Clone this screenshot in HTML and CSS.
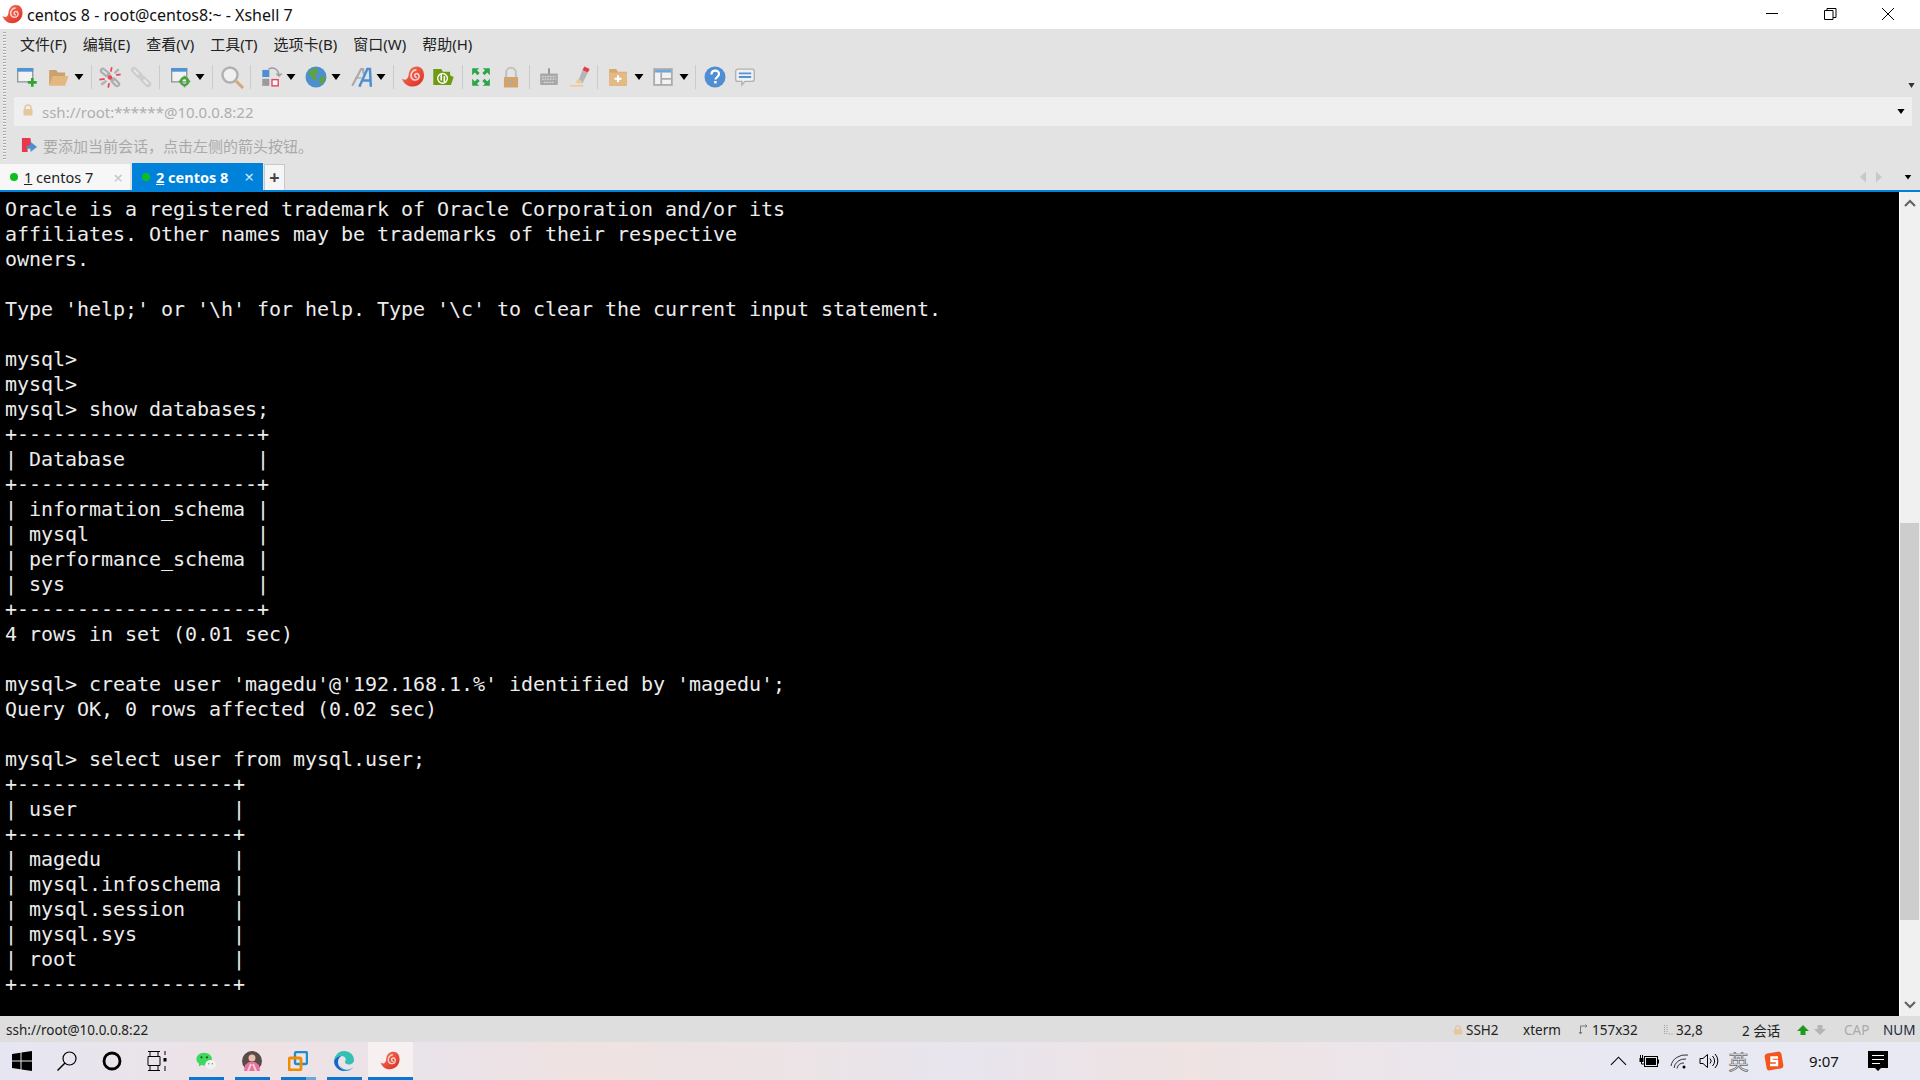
FILE: index.html
```html
<!DOCTYPE html>
<html lang="zh-CN">
<head>
<meta charset="utf-8">
<title>centos 8 - root@centos8:~ - Xshell 7</title>
<link rel="stylesheet" href="styles.css">
</head>
<body>
<svg class="defs" width="0" height="0" aria-hidden="true">
  <defs>
    <linearGradient id="snailGrad" x1="0" y1="0" x2="1" y2="1"><stop offset="0" stop-color="#f47a5c"/><stop offset="1" stop-color="#dd2a22"/></linearGradient>
    <symbol id="snail" viewBox="0 0 24 24">
      <path d="M0.500 13.500C4 16.500 7 14.500 7.500 9.500 8 4 11.500 1 16 1c4.800 0 7.500 4 7.500 9 0 7-5.500 12-12 12C6 22 2 18.500 0.500 13.500Z" fill="url(#snailGrad)"/>
      <path d="M16 12.500c-2.500 0-3-3-1-3.800 2.500-.9 4.300 1.800 3 4.300-1.600 3.200-7 3-8-1.500-.7-3.500 2-7 5.500-7" fill="none" stroke="#fff" stroke-opacity=".75" stroke-width="1.700"/>
    </symbol>
    <symbol id="win-sm" viewBox="0 0 26 26">
      <rect x="2.500" y="3.500" width="17" height="15" fill="#f2f2f2" stroke="#8a8f94" stroke-width="1.400"/>
      <rect x="2" y="3" width="18" height="4" fill="#4d95d8"/>
    </symbol>
  </defs>
</svg>
<div class="window">
  <header class="titlebar">
    <svg class="title-logo"><use href="#snail"/></svg>
    <span class="title-text">centos 8 - root@centos8:~ - Xshell 7</span>
    <div class="win-controls">
      <svg class="wc" viewBox="0 0 58 29"><path d="M23 13.500h12" stroke="#000" fill="none"/></svg>
      <svg class="wc" viewBox="0 0 58 29"><path d="M23.500 10.500h8.500v9h-8.500zM26 10V8.500h9v9h-3" stroke="#000" fill="none"/></svg>
      <svg class="wc" viewBox="0 0 58 29"><path d="M23 8l12 12M35 8L23 20" stroke="#000" fill="none"/></svg>
    </div>
  </header>

  <div class="chrome">
    <nav class="menubar">
      <span>文件(F)</span><span>编辑(E)</span><span>查看(V)</span><span>工具(T)</span><span>选项卡(B)</span><span>窗口(W)</span><span>帮助(H)</span>
    </nav>

    <div class="toolbar">
      <svg class="ic" viewBox="0 0 26 26"><use href="#win-sm" width="26" height="26"/><path d="M14 19h10M19 14v10" stroke="#2fa52f" stroke-width="3"/></svg>
      <svg class="ic ml5" viewBox="0 0 26 26"><path d="M3 5h8l2 3h8v5H8l-5 10z" fill="#c9a26e"/><path d="M3 23l4-11h18l-4 11z" fill="#e3b87e"/></svg>
      <i class="caret ml3"></i><i class="sep ml7"></i>
      <svg class="ic ml5" viewBox="0 0 26 26"><path d="M5 6l5 4M17 17l4 4" stroke="#aeaeae" stroke-width="7" stroke-linecap="round"/><path d="M5 6l4 3M18 18l3 3" stroke="#e3e3e3" stroke-width="2" stroke-linecap="round"/><path d="M4 21l4-3M22 5l-3 3" stroke="#b5b5b5" stroke-width="3" stroke-linecap="round"/><path d="M15 2l-1 5M25 10l-5 1M1 16l6-1M11 25l1-5" stroke="#e8465a" stroke-width="2"/><circle cx="13" cy="13.500" r="2.500" fill="#e8465a"/></svg>
      <svg class="ic ml5" viewBox="0 0 26 26"><path d="M5 5l6 6M15 15l6 6" stroke="#cdcdcd" stroke-width="7" stroke-linecap="round"/><path d="M5.500 5.500l5 5M15.500 15.500l5 5" stroke="#ececec" stroke-width="2" stroke-linecap="round"/><path d="M10 10l6 6" stroke="#cdcdcd" stroke-width="3"/></svg>
      <i class="sep ml5"></i>
      <svg class="ic ml8" viewBox="0 0 26 26"><use href="#win-sm" width="26" height="26"/><circle cx="17" cy="18" r="4" fill="none" stroke="#4aa53a" stroke-width="3"/><path d="M17 11.500v3M17 21.500v3M10.500 18h3M20.500 18h3" stroke="#4aa53a" stroke-width="2"/></svg>
      <i class="caret ml1"></i><i class="sep ml7"></i>
      <svg class="ic big ml6" viewBox="0 0 26 26"><circle cx="11" cy="11" r="7.500" fill="#f0f0f0" stroke="#b0b0b0" stroke-width="2.400"/><path d="M17 17l7 7" stroke="#d3a878" stroke-width="3"/></svg>
      <i class="sep ml5"></i>
      <svg class="ic ml8" viewBox="0 0 26 26"><rect x="2" y="5" width="8" height="8" fill="#4d8fd0"/><rect x="2" y="15" width="8" height="8" fill="#9a9a9a"/><rect x="13" y="16" width="7" height="7" fill="#fff" stroke="#e8465a" stroke-width="1.600"/><path d="M9 4c6-3 11 0 12 7M18 9l3 3 3-3" fill="none" stroke="#9a9a9a" stroke-width="1.500"/></svg>
      <i class="caret ml1"></i>
      <svg class="ic big ml7" viewBox="0 0 26 26"><circle cx="13" cy="13" r="10.500" fill="#4d8fd0"/><path d="M8 5l6-1 1 4-3 3 2 4-3 2-3-5-3-2zM17 13l5-1 0 4-4 5-2-3z" fill="#5fa23f"/></svg>
      <i class="caret ml2"></i>
      <svg class="ic ml8" viewBox="0 0 26 26"><path d="M2 23L12 4h2l1 6" fill="none" stroke="#a9a9a9" stroke-width="2.400"/><path d="M5 14h7" stroke="#a9a9a9" stroke-width="1.500"/><path d="M10 24L19 4h3l1 20M13 17h10" fill="none" stroke="#4d8fd0" stroke-width="2.800"/></svg>
      <i class="caret ml1"></i><i class="sep ml7"></i>
      <svg class="ic ml6" viewBox="0 0 24 24"><use href="#snail" width="24" height="24"/></svg>
      <svg class="ic ml4" viewBox="0 0 26 26"><path d="M2 4h9l2 3h8v4l4 2-3 9H2z" fill="#6f9b12"/><circle cx="12.500" cy="14.500" r="5.500" fill="none" stroke="#fff" stroke-width="1.600"/><path d="M11 10v7M14.500 12v7" stroke="#fff" stroke-width="1.800"/></svg>
      <i class="sep ml6"></i>
      <svg class="ic ml5" viewBox="0 0 26 26"><path d="M3 3h8l-2.500 2.500 3 3-2.500 2.500-3-3L3 11zM23 3h-8l2.500 2.500-3 3 2.500 2.500 3-3L23 11zM3 23h8l-2.500-2.500 3-3-2.500-2.500-3 3L3 15zM23 23h-8l2.500-2.500-3-3 2.500-2.500 3 3L23 15z" fill="#2fa54a"/></svg>
      <svg class="ic ml4" viewBox="0 0 26 26"><path d="M7.500 13V8a5.500 5.500 0 0 1 11 0v5" fill="none" stroke="#c2c2c2" stroke-width="2.400"/><rect x="5" y="13" width="16" height="12" rx="1" fill="#d3a36a"/><rect x="12" y="16" width="2.500" height="6" fill="#aaa"/></svg>
      <i class="sep ml5"></i>
      <svg class="ic ml6" viewBox="0 0 26 26"><path d="M13 3v7" stroke="#8f8f8f" stroke-width="2"/><rect x="3" y="9" width="20" height="13" rx="1" fill="#a8a8a8"/><path d="M5 12.500h16M5 15.500h16M7 19h12" stroke="#d8d8d8" stroke-width="1.400" stroke-dasharray="2 1"/></svg>
      <svg class="ic ml4" viewBox="0 0 26 26"><path d="M12 18l5-13 6 3-6 12z" fill="#b5b5b5"/><path d="M19 1l6 3-2 4-6-3z" fill="#e8384a"/><path d="M9 19l3-4 5 3-4 3z" fill="#eecb9d"/><rect x="3" y="22" width="15" height="2" fill="#eecb9d"/></svg>
      <i class="sep ml5"></i>
      <svg class="ic ml7" viewBox="0 0 26 26"><path d="M3 4h8l2 3h10v16H3z" fill="#d9a871"/><path d="M3 8h20v15H3z" fill="#e3b986"/><path d="M13 11v8M9 15h8" stroke="#fff" stroke-width="2.400"/></svg>
      <i class="caret ml3"></i>
      <svg class="ic ml6" viewBox="0 0 26 26"><rect x="3" y="4" width="20" height="18" fill="#f2f2f2" stroke="#aaa" stroke-width="2"/><rect x="4" y="5" width="18" height="3" fill="#6aa7de"/><path d="M11 8v14M11 15h12" stroke="#aaa" stroke-width="2"/></svg>
      <i class="caret ml3"></i><i class="sep ml6"></i>
      <svg class="ic big ml6" viewBox="0 0 26 26"><circle cx="13" cy="13" r="10.500" fill="#4f8ed4"/><path d="M9.500 10.500c0-5 7.500-5 7.500-.5 0 3-3.500 3-3.500 5.500" fill="none" stroke="#fff" stroke-width="2.200"/><rect x="12.200" y="17" width="2.400" height="2.400" fill="#fff"/></svg>
      <svg class="ic ml4" viewBox="0 0 26 26"><path d="M5 4h16a2.500 2.500 0 0 1 2.500 2.500v9A2.500 2.500 0 0 1 21 18h-8l-3.500 4v-4H5a2.500 2.500 0 0 1-2.500-2.500v-9A2.500 2.500 0 0 1 5 4z" fill="#f0f0f0" stroke="#b0b0b0" stroke-width="1.500"/><path d="M6 9h14M6 13h14" stroke="#4d95d8" stroke-width="2"/></svg>
      <i class="caret caret-end"></i>
    </div>

    <div class="addressbar">
      <svg class="addr-lock" viewBox="0 0 12 12"><path d="M3 6V4a3 3 0 0 1 6 0v2" fill="none" stroke="#e5c79d" stroke-width="1.500"/><rect x="1.500" y="5" width="9" height="6.500" rx="1" fill="#e5c79d"/></svg>
      <span class="addr-text">ssh://root:******@10.0.0.8:22</span>
      <i class="caret caret-addr"></i>
    </div>

    <div class="linkbar">
      <svg class="link-ic" viewBox="0 0 18 18"><path d="M1 1h9l1 8-4 1v6l-6 0z" fill="#e8384a"/><path d="M6 9h4V5l7 5.500-7 5.500v-3.500H6z" fill="#4d8fd0"/></svg>
      <span class="link-text">要添加当前会话，点击左侧的箭头按钮。</span>
    </div>

    <div class="tabbar">
      <div class="tab">
        <i class="dot"></i><span class="tab-name"><u>1</u> centos 7</span><span class="tab-x">×</span>
      </div>
      <div class="tab tab-active">
        <i class="dot"></i><span class="tab-name"><u>2</u> centos 8</span><span class="tab-x">×</span>
      </div>
      <div class="tab-add">+</div>
      <div class="tab-nav">
        <i class="arrow-l"></i><i class="arrow-r"></i><i class="caret"></i>
      </div>
    </div>
  </div>

  <main class="session">
<pre class="terminal">Oracle is a registered trademark of Oracle Corporation and/or its
affiliates. Other names may be trademarks of their respective
owners.

Type 'help;' or '\h' for help. Type '\c' to clear the current input statement.

mysql> 
mysql> 
mysql> show databases;
+--------------------+
| Database           |
+--------------------+
| information_schema |
| mysql              |
| performance_schema |
| sys                |
+--------------------+
4 rows in set (0.01 sec)

mysql> create user 'magedu'@'192.168.1.%' identified by 'magedu';
Query OK, 0 rows affected (0.02 sec)

mysql> select user from mysql.user;
+------------------+
| user             |
+------------------+
| magedu           |
| mysql.infoschema |
| mysql.session    |
| mysql.sys        |
| root             |
+------------------+</pre>
    <div class="scrollbar">
      <svg class="sb-arrow" viewBox="0 0 20 24"><path d="M5 14l5-5 5 5" fill="none" stroke="#606060" stroke-width="2"/></svg>
      <div class="sb-track"><div class="sb-thumb"></div></div>
      <svg class="sb-arrow" viewBox="0 0 20 24"><path d="M5 10l5 5 5-5" fill="none" stroke="#606060" stroke-width="2"/></svg>
    </div>
  </main>

  <footer class="statusbar">
    <span class="st-left">ssh://root@10.0.0.8:22</span>
    <div class="st-right">
      <span class="st st-ssh"><svg class="st-ic" viewBox="0 0 12 12"><path d="M3 6V4a3 3 0 0 1 6 0v2" fill="none" stroke="#e5c79d" stroke-width="1.500"/><rect x="1" y="5" width="10" height="6.500" rx="1" fill="#e5c79d"/></svg>SSH2</span>
      <span class="st st-term">xterm</span>
      <span class="st st-size"><svg class="st-ic" viewBox="0 0 10 12"><path d="M1.500 10V2H8M0 8l1.500 2L3 8M6.500 .5L8 2 6.500 3.500" fill="none" stroke="#777"/></svg>157x32</span>
      <span class="st st-pos"><svg class="st-ic" viewBox="0 0 10 12"><path d="M1.500 1v9M4 1v9M6 10h1M8.500 10h1" fill="none" stroke="#999" stroke-dasharray="1 1"/></svg>32,8</span>
      <span class="st st-sess">2 会话</span>
      <span class="st st-arrows">
        <svg viewBox="0 0 12 10" class="st-arr"><path d="M6 0l6 6H8.500v4h-5V6H0z" fill="#1f9a1f"/></svg>
        <svg viewBox="0 0 12 10" class="st-arr"><path d="M6 10L0 4h3.500V0h5v4H12z" fill="#b5b5b5"/></svg>
      </span>
      <span class="st st-cap">CAP</span>
      <span class="st st-num">NUM</span>
    </div>
  </footer>

  <div class="taskbar">
    <div class="tk-sys">
      <div class="tk-cell"><svg class="tk-ic" viewBox="0 0 20 20"><path d="M0 3l8.500-1.200V9.500H0zM9.500 1.600L20 0v9.500H9.500zM0 10.500h8.500v7.700L0 17zM9.500 10.500H20V20L9.500 18.400z" fill="#000"/></svg></div>
      <div class="tk-cell"><svg class="tk-ic" viewBox="0 0 20 20"><circle cx="12.500" cy="7.500" r="6.500" fill="none" stroke="#000" stroke-width="1.200"/><path d="M8 12l-7.500 7.500" stroke="#000" stroke-width="1.400"/></svg></div>
      <div class="tk-cell"><svg class="tk-ic" viewBox="0 0 20 20"><circle cx="10" cy="10" r="8" fill="none" stroke="#000" stroke-width="2.800"/></svg></div>
      <div class="tk-cell"><svg class="tk-ic" viewBox="0 0 20 20"><path d="M1 .5h12M1 19.500h12M1 14.500h12V5.500H1zM3 14.500v5M11 14.500v5M3 0v5M11 0v5M18 0v4M18 15v5" fill="none" stroke="#000"/><rect x="16.500" y="7" width="3" height="3.500" fill="#000"/></svg></div>
    </div>
    <div class="tk-apps">
      <div class="tk-app"><svg class="tk-ic" viewBox="0 0 22 20"><path d="M9 1c5 0 8.500 3.200 8.500 7s-3.500 7-8.500 7c-1 0-2-.1-3-.5L3 16l.5-3C1.500 11.800.500 10 .500 8 .500 4.200 4 1 9 1z" fill="#3fd75f"/><circle cx="6" cy="6" r="1.200" fill="#0d5f1f"/><circle cx="12" cy="6" r="1.200" fill="#0d5f1f"/><ellipse cx="16" cy="14" rx="6" ry="5" fill="#f2f2f2"/><circle cx="14" cy="13" r=".8" fill="#888"/><circle cx="18" cy="13" r=".8" fill="#888"/></svg></div>
      <div class="tk-app"><svg class="tk-ic" viewBox="0 0 20 20"><circle cx="10" cy="10" r="10" fill="#5a4a48"/><path d="M2 20l1-6 4-3h6l4 3 1 6z" fill="#e870a8"/><circle cx="10" cy="7" r="3.500" fill="#e8c0b0"/><path d="M6 20l3-7M14 20l-3-7" stroke="#f5d0c0" stroke-width="2"/></svg></div>
      <div class="tk-app tk-app-vm"><svg class="tk-ic" viewBox="0 0 20 20"><rect x="7" y="1" width="12" height="12" rx="1.500" fill="none" stroke="#1d8fd0" stroke-width="2.400"/><rect x="1" y="7" width="12" height="12" rx="1.500" fill="none" stroke="#f08c00" stroke-width="2.800"/></svg></div>
      <div class="tk-app"><svg class="tk-ic" viewBox="0 0 20 20"><path d="M10 0c5.500 0 10 3.800 10 9 0 2.800-2.300 4.500-5 4.500-2 0-4-.8-4-2.500 0-1 .8-1.300.8-2.500C11.800 6.500 9.800 5 7.500 5 4 5 1 7 0 10 .500 4.500 4.500 0 10 0z" fill="#35c1b1"/><path d="M0 10c1-3 4-5 7.500-5-2 1-3.500 3-3.500 6 0 4.500 4 8 8.500 8 .500 0 1 0 1.500-.2C12.500 19.600 11.300 20 10 20 4.500 20 0 15.500 0 10z" fill="#1668c8"/><path d="M14 19.800c-3 .5-8-1.500-8-7 0 4 4 6 7 6 2.500 0 5-1 6-3-.8 2-2.800 3.500-5 4z" fill="#1b9de2"/></svg></div>
      <div class="tk-app tk-app-active"><svg class="tk-ic" viewBox="0 0 24 24"><use href="#snail" width="24" height="24"/></svg></div>
    </div>
    <div class="tray">
      <div class="tr-cell tr-up"><svg class="tr-ic" viewBox="0 0 18 12"><path d="M1 10l8-8 8 8" fill="none" stroke="#000" stroke-width="1.200"/></svg></div>
      <div class="tr-cell tr-batt"><svg class="tr-ic" viewBox="0 0 20 14"><path d="M1.500 1v3M3.500 1v3" stroke="#000"/><rect x="0.500" y="4" width="4" height="4" fill="#000"/><path d="M2.500 8v2h3" fill="none" stroke="#000"/><rect x="5.500" y="2.500" width="13" height="10" fill="none" stroke="#000"/><rect x="7" y="4" width="10" height="7" fill="#000"/><rect x="18.500" y="5.500" width="1.500" height="4" fill="#000"/></svg></div>
      <div class="tr-cell tr-wifi"><svg class="tr-ic" viewBox="0 0 20 16"><path d="M1 13a15 13 0 0 1 17-11M4 15a11 10 0 0 1 12-9M7 15.500a7 7 0 0 1 7-5.500" fill="none" stroke="#333"/><circle cx="14" cy="14" r="1.500" fill="#000"/></svg></div>
      <div class="tr-cell tr-vol"><svg class="tr-ic" viewBox="0 0 20 16"><path d="M1 5.500h3L8.500 1.500v13L4 10.500H1zM11 5.500a3.500 3.500 0 0 1 0 5M13.500 3a7 7 0 0 1 0 10M16 1a10 10 0 0 1 0 14" fill="none" stroke="#000"/></svg></div>
      <div class="tr-cell tr-ime">英</div>
      <div class="tr-cell tr-sogou"><svg class="tr-ic" viewBox="0 0 20 20"><rect x="1.500" y="1.500" width="17" height="17" rx="3" transform="rotate(-10 10 10)" fill="#f4551f"/><path d="M14 6.500H7.500v3.500h5.500v4H6" fill="none" stroke="#fff" stroke-width="2.400"/></svg></div>
      <div class="tr-cell tr-clock">9:07</div>
      <div class="tr-cell tr-note"><svg class="tr-ic" viewBox="0 0 20 20"><path d="M0 0h20v17h-7l-3 3-3-3H0z" fill="#000"/><path d="M4 4.500h12M4 8.500h12M4 12.500h8" stroke="#fff"/></svg></div>
    </div>
  </div>
</div>
</body>
</html>
```
FILE: styles.css
```css
* { box-sizing: border-box; }
html, body { margin: 0; padding: 0; width: 1920px; height: 1080px; overflow: hidden; }
body { font-family: "Noto Sans", "Noto Sans CJK SC", sans-serif; color: #111; background: #e3e3e3; }
i { display: block; }
.defs { position: absolute; }
.window { display: flex; flex-direction: column; width: 1920px; height: 1080px; }

.titlebar { display: flex; align-items: center; height: 29px; background: #fff; padding-left: 2px; flex: none; }
.title-logo { width: 21px; height: 21px; margin-right: 4px; }
.title-text { font-size: 16px; color: #111; }
.win-controls { display: flex; margin-left: auto; padding-right: 3px; }
.wc { width: 58px; height: 29px; }

.chrome { position: relative; flex: none; background: #e3e3e3; }
.chrome::before { content: ""; position: absolute; left: 3px; top: 3px; width: 3px; height: 128px; background: repeating-linear-gradient(#a9a9a9 0 1px, #f3f3f3 1px 2px, #e3e3e3 2px 3px); }
.menubar { display: flex; align-items: center; height: 29px; padding-left: 20px; gap: 16px; font-size: 15px; color: #222; }
.toolbar { position: relative; display: flex; align-items: center; height: 39px; padding: 0 0 1px 14px; }
.ic { width: 26px; height: 26px; flex: none; padding: 1.500px; filter: blur(.35px); }
.big { padding: 0; }
.caret { width: 10px; height: 6px; flex: none; background: #000; clip-path: polygon(5% 0, 95% 0, 50% 100%); }
.sep { width: 1px; height: 24px; background: #cbcbcb; flex: none; }
.ml1 { margin-left: 1px; } .ml2 { margin-left: 2px; } .ml3 { margin-left: 3px; } .ml4 { margin-left: 4px; }
.ml5 { margin-left: 5px; } .ml6 { margin-left: 6px; } .ml7 { margin-left: 7px; } .ml8 { margin-left: 8px; }
.caret-end { position: absolute; right: 5px; top: 25px; width: 7px; height: 5px; background: #333; }

.addressbar { display: flex; align-items: center; height: 29px; margin: 0 8px 0 14px; padding-left: 8px; background: #efefef; }
.addr-lock { width: 12px; height: 12px; margin-right: 8px; margin-top: -4px; }
.addr-text { font-size: 15px; color: #aeaeae; }
.caret-addr { margin-left: auto; margin-right: 7px; width: 8px; height: 5px; }

.linkbar { display: flex; align-items: center; height: 37px; padding: 1px 0 0 21px; }
.link-ic { width: 17px; height: 17px; margin-right: 5px; }
.link-text { font-size: 15px; color: #a9a9a9; }

.tabbar { display: flex; align-items: flex-end; height: 27px; }
.tab { display: flex; align-items: center; width: 130px; height: 26px; margin-right: 2px; padding-left: 10px; background: #f7f7f7; font-size: 14.500px; color: #222; }
.tab-active { width: 131px; height: 27px; margin-right: 1px; background: #0082da; color: #fff; font-weight: 700; }
.dot { width: 8px; height: 8px; border-radius: 50%; background: #0cbf20; margin-right: 6px; flex: none; }
.tab-name { white-space: pre; }
.tab-x { margin-left: auto; margin-right: 7px; font-weight: 400; font-size: 17px; color: #c4c4c4; }
.tab-active .tab-x { margin-right: 9px; color: #cfe6f7; }
.tab-add { width: 21px; height: 26px; background: #f5f5f5; border: 1px solid #c9c9c9; border-bottom: 0; text-align: center; font-size: 18px; font-weight: 700; line-height: 24px; color: #444; }
.tab-nav { display: flex; align-items: center; height: 26px; margin-left: auto; padding-right: 8px; }
.arrow-l, .arrow-r { width: 6px; height: 11px; background: #c8c8c8; }
.arrow-l { clip-path: polygon(100% 0, 100% 100%, 0 50%); margin-right: 10px; }
.arrow-r { clip-path: polygon(0 0, 100% 50%, 0 100%); margin-right: 22px; }
.tab-nav .caret { width: 8px; height: 5px; }

.session { display: flex; height: 826px; border-top: 2px solid #0082da; flex: none; }
.terminal { flex: 1; margin: 0; padding: 5px 0 0 5px; background: #000; color: #ececec; font-family: "DejaVu Sans Mono", monospace; font-size: 20px; letter-spacing: -.04px; line-height: 25px; overflow: hidden; }
.scrollbar { display: flex; flex-direction: column; width: 21px; background: #f0f0f0; border-left: 1px solid #fff; flex: none; }
.sb-arrow { width: 20px; height: 24px; flex: none; }
.sb-track { flex: 1; padding-top: 307px; }
.sb-thumb { width: 19px; height: 397px; background: #cdcdcd; }

.statusbar { display: flex; align-items: center; justify-content: space-between; height: 26px; padding-top: 1px; background: #dedede; font-size: 13.500px; color: #222; flex: none; }
.st-left { padding-left: 6px; }
.st-right { display: flex; align-items: center; }
.st { display: flex; align-items: center; white-space: pre; }
.st-ic { width: 10px; height: 12px; margin-right: 3px; }
.st-ssh { width: 70px; }
.st-term { width: 56px; }
.st-size { width: 84px; }
.st-pos { width: 79px; }
.st-sess { width: 55px; }
.st-arrows { width: 47px; gap: 5px; }
.st-arr { width: 12px; height: 10px; }
.st-cap { width: 39px; color: #aaa; }
.st-num { width: 37px; color: #1b2b3b; }

.taskbar { display: flex; height: 38px; flex: none; background: linear-gradient(90deg, #e6e6f2 0, #eee2e4 14%, #e9e3ea 22%, #efe2e2 30%, #ece4e6 42%, #e8e5ee 50%, #efe3e3 62%, #ebe6ec 74%, #e8e8f2 84%, #e9e9f3 100%); }
.tk-sys { display: flex; }
.tk-cell { display: flex; align-items: center; justify-content: center; width: 45px; height: 38px; padding-right: 1px; }
.tk-ic { width: 20px; height: 20px; }
.tk-apps { display: flex; margin-left: 3px; }
.tk-app { position: relative; display: flex; align-items: center; justify-content: center; width: 46px; height: 38px; }
.tk-app::after { content: ""; position: absolute; left: 6px; right: 5px; bottom: 0; height: 3px; background: #0a78d2; }
.tk-app-vm::after { background: linear-gradient(90deg, #0a78d2 0 71%, #6aa9dd 71% 100%); }
.tk-app-active { background: #f6f0f0; width: 45px; margin-left: 1px; padding-right: 2px; }
.tk-app-active::after { left: 0; right: 0; }
.tray { display: flex; margin-left: auto; margin-right: 20px; align-items: center; }
.tr-cell { display: flex; align-items: center; justify-content: center; height: 38px; }
.tr-ic { width: 20px; height: 20px; }
.tr-up { width: 30px; } .tr-up .tr-ic { width: 17px; height: 12px; }
.tr-batt { width: 31px; }
.tr-wifi { width: 31px; }
.tr-vol { width: 27px; }
.tr-ime { width: 33px; font-size: 20px; color: #e8e8f0; -webkit-text-stroke: .7px #6a6a6a; }
.tr-sogou { width: 37px; }
.tr-clock { width: 64px; font-size: 15px; color: #111; }
.tr-note { width: 44px; }
```
